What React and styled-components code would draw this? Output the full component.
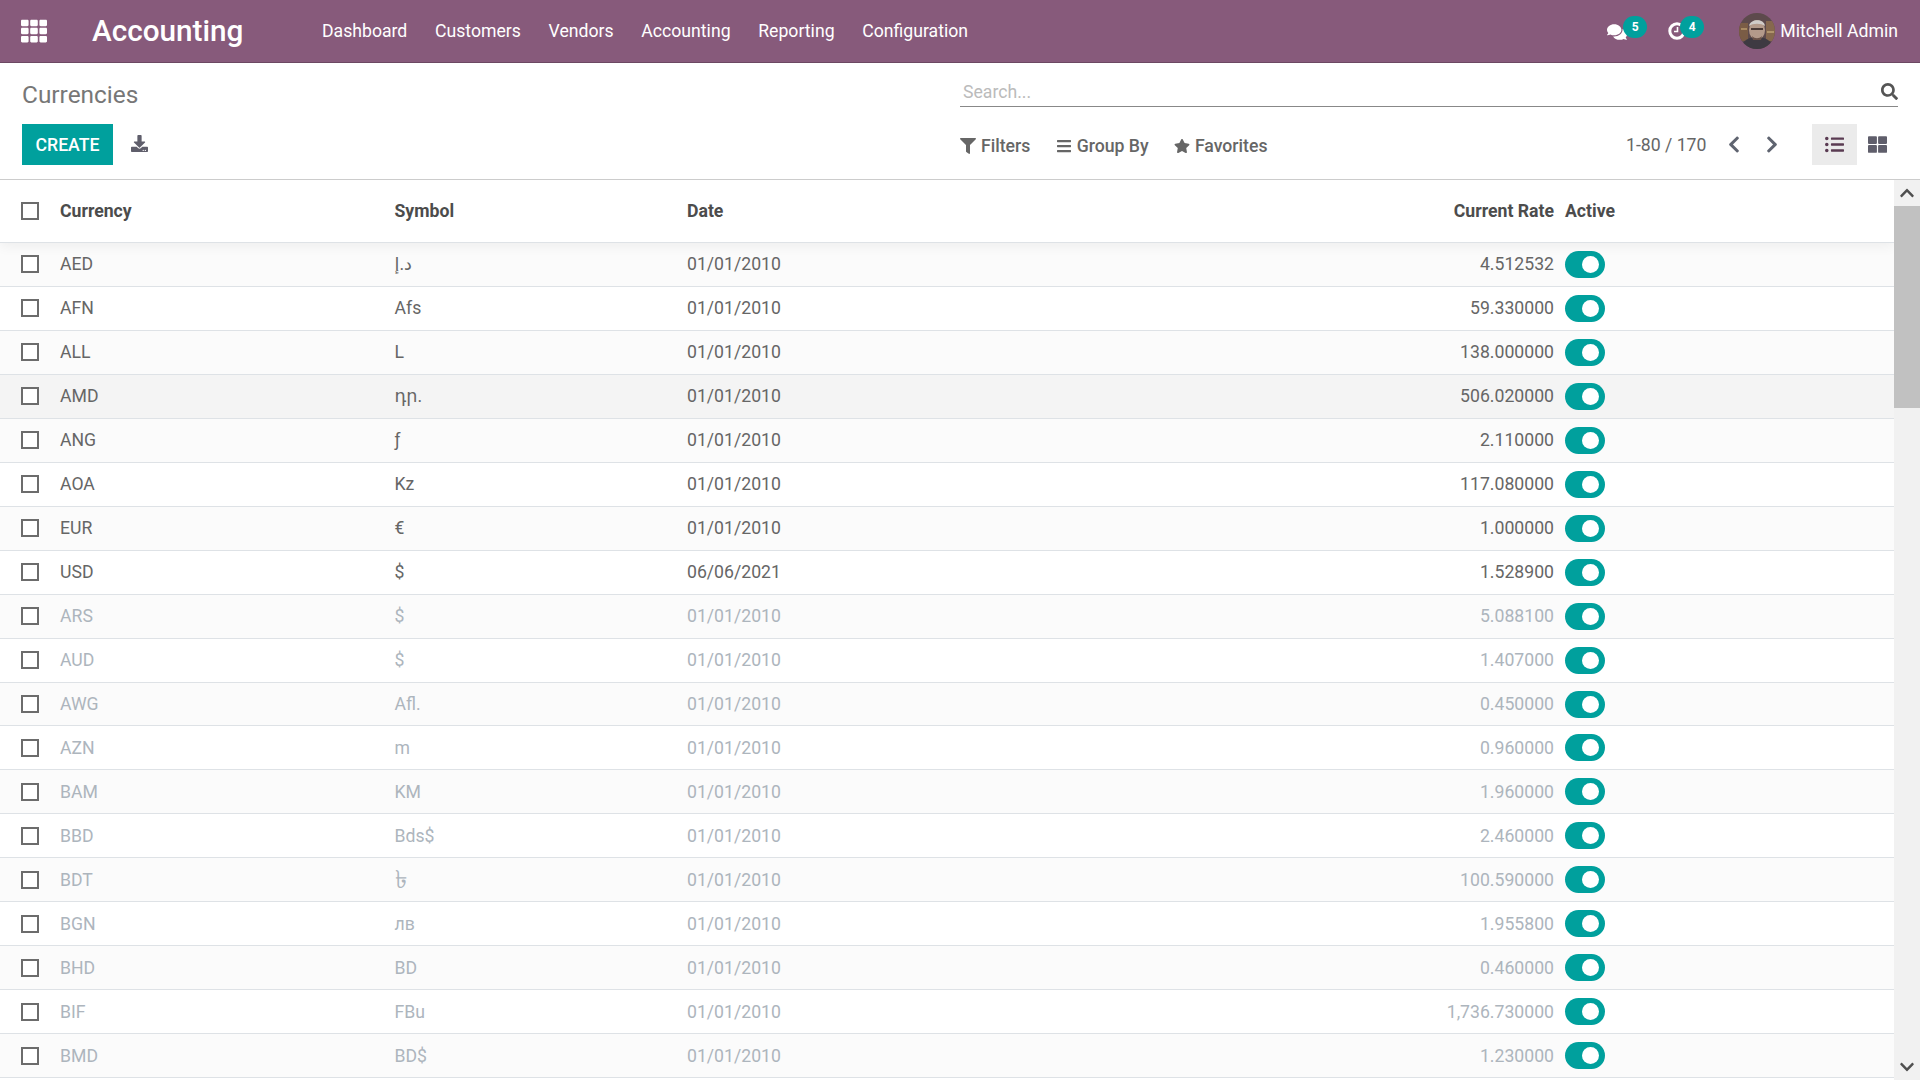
import React from 'react'
import styled, { createGlobalStyle } from 'styled-components'
import {
  FaBars,
  FaChevronDown,
  FaChevronLeft,
  FaChevronRight,
  FaChevronUp,
  FaComments,
  FaDownload,
  FaFilter,
  FaListUl,
  FaSearch,
  FaStar,
  FaTh,
  FaThLarge,
} from 'react-icons/fa'

const menus = ['Dashboard', 'Customers', 'Vendors', 'Accounting', 'Reporting', 'Configuration']

const currencies = [
  ['AED', 'د.إ', '01/01/2010', '4.512532'],
  ['AFN', 'Afs', '01/01/2010', '59.330000'],
  ['ALL', 'L', '01/01/2010', '138.000000'],
  ['AMD', 'դր.', '01/01/2010', '506.020000'],
  ['ANG', 'ƒ', '01/01/2010', '2.110000'],
  ['AOA', 'Kz', '01/01/2010', '117.080000'],
  ['EUR', '€', '01/01/2010', '1.000000'],
  ['USD', '$', '06/06/2021', '1.528900'],
  ['ARS', '$', '01/01/2010', '5.088100', true],
  ['AUD', '$', '01/01/2010', '1.407000', true],
  ['AWG', 'Afl.', '01/01/2010', '0.450000', true],
  ['AZN', 'm', '01/01/2010', '0.960000', true],
  ['BAM', 'KM', '01/01/2010', '1.960000', true],
  ['BBD', 'Bds$', '01/01/2010', '2.460000', true],
  ['BDT', '৳', '01/01/2010', '100.590000', true],
  ['BGN', 'лв', '01/01/2010', '1.955800', true],
  ['BHD', 'BD', '01/01/2010', '0.460000', true],
  ['BIF', 'FBu', '01/01/2010', '1,736.730000', true],
  ['BMD', 'BD$', '01/01/2010', '1.230000', true],
]

const Avatar = () => (
  <AvatarSvg viewBox="0 0 36 36">
    <defs>
      <clipPath id="avatar-clip">
        <circle cx="18" cy="18" r="18" />
      </clipPath>
    </defs>
    <g clipPath="url(#avatar-clip)">
      <rect width="36" height="36" fill="#5d4a4c" />
      <rect x="0" y="10" width="9" height="18" fill="#7a5c45" />
      <rect x="2" y="15" width="6" height="2" fill="#a98a62" />
      <rect x="27" y="8" width="9" height="20" fill="#86684e" />
      <rect x="28" y="18" width="7" height="2" fill="#b0946c" />
      <path d="M2 36c1-9 8-12 16-12s15 3 16 12z" fill="#3e3a42" />
      <ellipse cx="18" cy="17" rx="8" ry="10" fill="#b39a8a" />
      <path d="M10 13c1-7 15-8 16 0-4-3-12-3-16 0z" fill="#d0ccc8" />
      <rect x="12" y="15" width="12" height="2" fill="#4a3a36" />
      <path d="M13 23c3 3 7 3 10 0l-1 4h-8z" fill="#6a5248" />
    </g>
  </AvatarSvg>
)

const ClockIcon = () => (
  <svg viewBox="0 0 18 18" width="18" height="18" fill="none" stroke="currentColor">
    <circle cx="9" cy="9" r="7.2" strokeWidth="3" />
    <path d="M9.5 5v4.5H6" strokeWidth="1.6" />
  </svg>
)

const App = () => {
  return (
    <Page>
      <GlobalStyle />
      <NavBar>
        <AppsIcon />
        <Brand>Accounting</Brand>
        <Menu>
          {menus.map((item) => (
            <MenuItem key={item}>{item}</MenuItem>
          ))}
        </Menu>
        <Systray>
          <TrayIcon>
            <FaComments />
            <Badge $left={16}>5</Badge>
          </TrayIcon>
          <TrayIcon>
            <ClockIcon />
            <Badge $left={12}>4</Badge>
          </TrayIcon>
          <UserMenu>
            <Avatar />
            Mitchell Admin
          </UserMenu>
        </Systray>
      </NavBar>

      <ControlPanel>
        <Title>Currencies</Title>
        <SearchBar>
          <Placeholder>Search...</Placeholder>
          <FaSearch />
        </SearchBar>
        <Buttons>
          <CreateButton>CREATE</CreateButton>
          <ExportIcon />
        </Buttons>
        <Options>
          <SearchOptions>
            <OptionItem><FaFilter /> Filters</OptionItem>
            <OptionItem><FaBars /> Group By</OptionItem>
            <OptionItem><FaStar /> Favorites</OptionItem>
          </SearchOptions>
          <Pager>1-80 / 170</Pager>
          <PagerArrows>
            <FaChevronLeft />
            <FaChevronRight />
          </PagerArrows>
          <ViewButton $active $width={45}><FaListUl /></ViewButton>
          <ViewButton $width={41}><FaThLarge /></ViewButton>
        </Options>
      </ControlPanel>

      <Content>
        <ListView>
          <HeaderRow>
            <CheckCell><Checkbox /></CheckCell>
            <span>Currency</span>
            <span>Symbol</span>
            <span>Date</span>
            <RateCell>Current Rate</RateCell>
            <ActiveCell>Active</ActiveCell>
          </HeaderRow>
          {currencies.map(([code, symbol, date, rate, muted], index) => (
            <Row key={code} $muted={muted} $odd={index % 2 === 0} $hover={code === 'AMD'}>
              <CheckCell><Checkbox /></CheckCell>
              <span>{code}</span>
              <SymbolCell $large={code === 'BDT'}>{symbol}</SymbolCell>
              <span>{date}</span>
              <RateCell>{rate}</RateCell>
              <ActiveCell><Toggle /></ActiveCell>
            </Row>
          ))}
        </ListView>
        <ScrollBar>
          <ScrollArrow><FaChevronUp /></ScrollArrow>
          <ScrollThumb />
          <ScrollTrack />
          <ScrollArrow><FaChevronDown /></ScrollArrow>
        </ScrollBar>
      </Content>
    </Page>
  )
}

export default App

const GlobalStyle = createGlobalStyle`
  html, body {
    margin: 0;
    padding: 0;
    height: 100%;
    overflow: hidden;
    background: #fff;
  }
  * {
    box-sizing: border-box;
  }
`

const Page = styled.div`
  width: 1920px;
  height: 1080px;
  display: flex;
  flex-direction: column;
  overflow: hidden;
  font-family: Roboto, "Noto Sans", "DejaVu Sans", sans-serif;
  font-size: 17.65px;
  color: #666;
`

const NavBar = styled.header`
  height: 63px;
  flex: none;
  display: flex;
  align-items: center;
  padding: 0 22px 1px 21px;
  background: #875a7b;
  border-bottom: 1px solid #6c4862;
  color: #fff;
`

const AppsIcon = styled(FaTh)`
  width: 26px;
  height: 26px;
  margin-right: 45px;
`

const Brand = styled.div`
  font-size: 29.7px;
  font-weight: 500;
  width: 230px;
  white-space: nowrap;
`

const Menu = styled.nav`
  display: flex;
  gap: 27.7px;
  padding-top: 1px;
`

const MenuItem = styled.a`
  font-size: 17.65px;
`

const Systray = styled.div`
  margin-left: auto;
  display: flex;
  align-items: center;
`

const TrayIcon = styled.div`
  position: relative;
  width: 61px;
  height: 24px;
  font-size: 20px;
  line-height: 24px;
  svg {
    vertical-align: top;
    margin-top: 3px;
  }
`

const Badge = styled.span`
  position: absolute;
  left: ${(p) => p.$left}px;
  top: -3px;
  width: 24px;
  height: 22px;
  border-radius: 11px;
  background: #00a09d;
  font-size: 12px;
  font-weight: 700;
  line-height: 22px;
  text-align: center;
`

const UserMenu = styled.div`
  display: flex;
  align-items: center;
  gap: 5px;
  margin-left: 10px;
`

const AvatarSvg = styled.svg`
  width: 36px;
  height: 36px;
`

const ControlPanel = styled.section`
  height: 117px;
  flex: none;
  display: grid;
  grid-template-columns: 1fr 938px;
  grid-template-rows: 61px 41px;
  padding: 0 22px;
  border-bottom: 1px solid #ccc;
`

const Title = styled.h1`
  margin: 0;
  padding-top: 17px;
  font-size: 24.4px;
  font-weight: 400;
  color: #777;
`

const SearchBar = styled.div`
  align-self: start;
  height: 29px;
  margin-top: 15px;
  display: flex;
  align-items: center;
  justify-content: space-between;
  border-bottom: 1px solid #888;
  svg {
    width: 17px;
    height: 17px;
    color: #555;
    margin-bottom: 2px;
  }
`

const Placeholder = styled.span`
  padding-left: 3px;
  color: #bbb;
`

const Buttons = styled.div`
  display: flex;
  align-items: center;
  gap: 18px;
`

const CreateButton = styled.button`
  width: 91px;
  height: 41px;
  padding: 0;
  border: none;
  background: #00a09d;
  color: #fff;
  font-family: inherit;
  font-size: 17.65px;
  font-weight: 500;
`

const ExportIcon = styled(FaDownload)`
  width: 17px;
  height: 17px;
  margin-bottom: 2px;
  color: #5f5e6b;
`

const Options = styled.div`
  display: flex;
  align-items: center;
`

const SearchOptions = styled.div`
  width: 666px;
  flex: none;
  display: flex;
  gap: 25.3px;
  padding-top: 2px;
`

const OptionItem = styled.span`
  display: flex;
  align-items: center;
  gap: 5px;
  color: #666;
  font-weight: 500;
  svg {
    width: 16px;
    height: 16px;
  }
`

const Pager = styled.span`
  width: 101px;
  flex: none;
  color: #666;
`

const PagerArrows = styled.div`
  width: 85px;
  flex: none;
  display: flex;
  gap: 24px;
  color: #5f6470;
  svg {
    width: 14px;
    height: 19px;
  }
`

const ViewButton = styled.div`
  width: ${(p) => p.$width}px;
  height: 41px;
  flex: none;
  display: flex;
  align-items: center;
  justify-content: center;
  background: ${(p) => (p.$active ? '#ebebeb' : 'transparent')};
  color: ${(p) => (p.$active ? '#5a3b52' : '#5f5e6b')};
  svg {
    width: 19px;
    height: 19px;
  }
`

const Content = styled.main`
  flex: 1;
  min-height: 0;
  display: flex;
`

const ListView = styled.div`
  flex: 1;
  min-width: 0;
  overflow: hidden;
`

const columns = '60px 334.5px 292.5px 434px 433px 1fr'

const HeaderRow = styled.div`
  position: relative;
  z-index: 1;
  height: 63px;
  display: grid;
  grid-template-columns: ${columns};
  align-items: center;
  border-bottom: 1px solid #dee2e6;
  box-shadow: 0 3px 12px rgba(0, 0, 0, 0.06);
  background: #fff;
  color: #4c4c4c;
  font-weight: 700;
`

const Row = styled.div`
  height: 43.96px;
  line-height: 24px;
  display: grid;
  grid-template-columns: ${columns};
  align-items: center;
  border-bottom: 1px solid #dee2e6;
  background: ${(p) => (p.$hover ? '#f4f4f4' : p.$odd ? '#fbfbfb' : '#fff')};
  color: ${(p) => (p.$muted ? '#adb5bd' : '#666')};
`

const CheckCell = styled.div`
  padding-left: 21px;
  display: flex;
`

const Checkbox = styled.span`
  width: 18px;
  height: 18px;
  border: 2px solid #6c6c6c;
  background: #fff;
`

const SymbolCell = styled.span`
  font-size: ${(p) => (p.$large ? '25px' : 'inherit')};
`

const RateCell = styled.span`
  text-align: right;
`

const ActiveCell = styled.span`
  padding-left: 11px;
  display: flex;
  align-items: center;
`

const Toggle = styled.span`
  width: 40px;
  height: 27px;
  padding-right: 6px;
  display: flex;
  align-items: center;
  justify-content: flex-end;
  border-radius: 14px;
  background: #00a09d;
  &::after {
    content: '';
    width: 17px;
    height: 17px;
    border-radius: 50%;
    background: #fff;
  }
`

const ScrollBar = styled.aside`
  width: 26px;
  flex: none;
  display: flex;
  flex-direction: column;
  background: #f1f1f1;
`

const ScrollArrow = styled.div`
  height: 26px;
  display: flex;
  align-items: center;
  justify-content: center;
  color: #505050;
  svg {
    width: 16px;
    height: 16px;
  }
`

const ScrollThumb = styled.div`
  height: 202px;
  background: #c1c1c1;
`

const ScrollTrack = styled.div`
  flex: 1;
`
